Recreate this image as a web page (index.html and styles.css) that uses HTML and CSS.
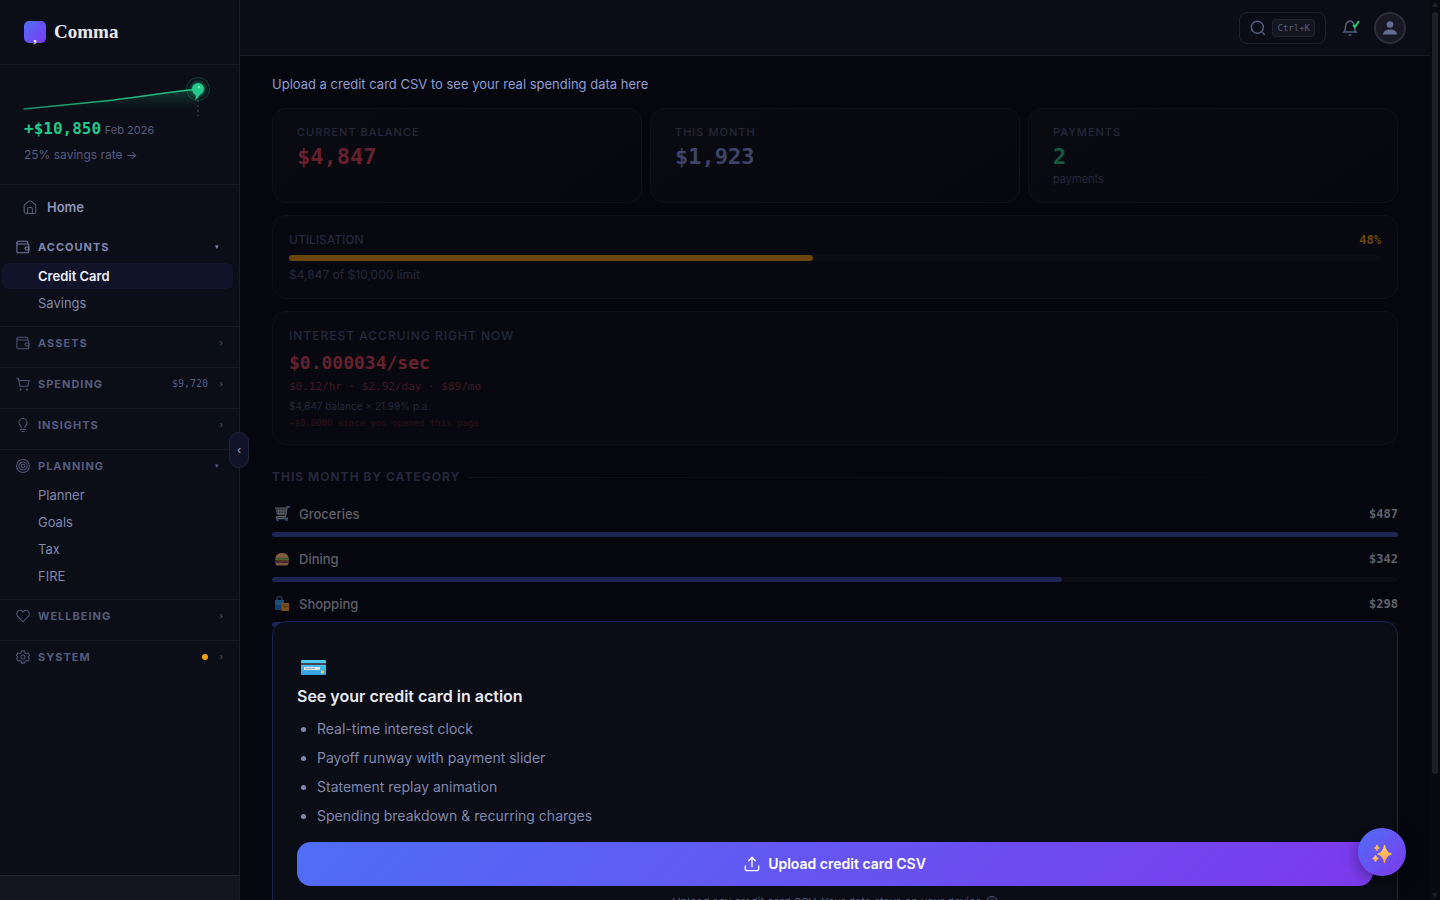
FILE: index.html
```html
<!DOCTYPE html>
<html lang="en">
<head>
  <meta charset="UTF-8">
  <meta name="viewport" content="width=device-width, initial-scale=1.0">
  <title>Comma - Credit Card</title>
  <link rel="stylesheet" href="styles.css">
</head>
<body>
  <div class="app">
    <aside class="sidebar">
      <a class="brand" href="#">
        <span class="brand-mark">,</span>
        <span class="brand-name">Comma</span>
      </a>

      <a class="summary" href="#">
        <svg class="spark" width="192" height="40" viewBox="0 0 192 40" fill="none">
          <defs>
            <linearGradient id="area" x1="0" y1="0" x2="0" y2="1">
              <stop offset="0" stop-color="#22c98a" stop-opacity=".22"/>
              <stop offset="1" stop-color="#22c98a" stop-opacity="0"/>
            </linearGradient>
            <linearGradient id="line" x1="0" y1="0" x2="1" y2="0">
              <stop offset="0" stop-color="#22c98a" stop-opacity=".7"/>
              <stop offset="1" stop-color="#22c98a"/>
            </linearGradient>
            <filter id="glow" x="-100%" y="-100%" width="300%" height="300%"><feGaussianBlur stdDeviation="2"/></filter>
          </defs>
          <path d="M0 33 L80 25 L140 17 L174 13 V33 Z" fill="url(#area)"/>
          <path d="M0 33 C60 27 70 26 90 24 C120 20 140 17 174 13" stroke="url(#line)" stroke-width="1.5" stroke-linecap="round"/>
          <path d="M174 24v16" stroke="#2a3246" stroke-width="2" stroke-dasharray="2 3"/>
          <circle cx="174" cy="13" r="11.500" stroke="#22c98a" stroke-opacity=".28"/>
          <circle cx="174" cy="13" r="7" fill="#22c98a" opacity=".6" filter="url(#glow)"/>
          <circle cx="174" cy="13" r="6" fill="#22c98a"/>
          <path d="M176 17c0 3-2 5-5 7 1-3 1-4 0-6z" fill="#22c98a"/>
          <circle cx="175" cy="11" r="1.300" fill="#7be8c0"/>
        </svg>
        <span class="summary-line"><strong>+$10,850</strong> <small>Feb 2026</small></span>
        <span class="summary-rate">25% savings rate →</span>
      </a>

      <nav class="nav">
        <a class="nav-home" href="#">
          <svg class="icon" viewBox="0 0 24 24"><path d="M2 10c0-1 .5-2 1.300-2.500L10.500 1.800c1-.8 2-.8 3 0l7.200 5.700c.8.5 1.300 1.500 1.300 2.500v10a3 3 0 0 1-3 3H5a3 3 0 0 1-3-3z"/><path d="M8 23v-8a2 2 0 0 1 2-2h4a2 2 0 0 1 2 2v8"/></svg>
          Home
        </a>

        <div class="group open current">
          <button class="group-head">
            <svg class="icon" viewBox="0 0 24 24"><path d="M20 7V4a2 2 0 0 0-2-2H4a2.500 2.500 0 0 0 0 5h16a2 2 0 0 1 2 2v11a2 2 0 0 1-2 2H4a2.500 2.500 0 0 1-2.500-2.500V4"/><path d="M22 12h-4a2.500 2.500 0 0 0 0 5h4z"/></svg>
            <span>Accounts</span><i>▾</i>
          </button>
          <ul>
            <li><a class="active" href="#">Credit Card</a></li>
            <li><a href="#">Savings</a></li>
          </ul>
        </div>

        <div class="group">
          <button class="group-head">
            <svg class="icon" viewBox="0 0 24 24"><path d="M20 7V4a2 2 0 0 0-2-2H4a2.500 2.500 0 0 0 0 5h16a2 2 0 0 1 2 2v11a2 2 0 0 1-2 2H4a2.500 2.500 0 0 1-2.500-2.500V4"/><path d="M22 12h-4a2.500 2.500 0 0 0 0 5h4z"/></svg>
            <span>Assets</span><i>›</i>
          </button>
        </div>

        <div class="group">
          <button class="group-head">
            <svg class="icon" viewBox="0 0 24 24"><circle cx="8" cy="21.500" r="1"/><circle cx="19" cy="21.500" r="1"/><path d="M1 2h3l3 14h13l2.500-10H5"/></svg>
            <span>Spending</span><em>$9,720</em><i>›</i>
          </button>
        </div>

        <div class="group">
          <button class="group-head">
            <svg class="icon" viewBox="0 0 24 24"><path d="M9 16c0-3-4-4-4-8a7 7 0 0 1 14 0c0 4-4 5-4 8M8 19.500h8M10 23h4"/></svg>
            <span>Insights</span><i>›</i>
          </button>
        </div>

        <div class="group open">
          <button class="group-head">
            <svg class="icon" viewBox="0 0 24 24"><circle cx="12" cy="12" r="11"/><circle cx="12" cy="12" r="7"/><circle cx="12" cy="12" r="3"/></svg>
            <span>Planning</span><i>▾</i>
          </button>
          <ul>
            <li><a href="#">Planner</a></li>
            <li><a href="#">Goals</a></li>
            <li><a href="#">Tax</a></li>
            <li><a href="#">FIRE</a></li>
          </ul>
        </div>

        <div class="group">
          <button class="group-head">
            <svg class="icon" viewBox="0 0 24 24"><path d="M21 4a6 6 0 0 0-8.200 0L12 5l-.8-1A6 6 0 0 0 3 4a6 6 0 0 0 0 8.500L12 22l9-9.500A6 6 0 0 0 21 4z"/></svg>
            <span>Wellbeing</span><i>›</i>
          </button>
        </div>

        <div class="group">
          <button class="group-head">
            <svg class="icon" viewBox="0 0 24 24"><path d="M9.500 1.500h5l.8 3.400 2.200 1.200 3.300-1 2.400 4.200-2.500 2.400v.6l2.500 2.400-2.400 4.200-3.300-1-2.200 1.200-.8 3.400h-5l-.8-3.400-2.200-1.200-3.300 1-2.400-4.200 2.500-2.400v-.6L.800 9.300l2.400-4.200 3.300 1 2.200-1.200z"/><circle cx="12" cy="12" r="3.500"/></svg>
            <span>System</span><b class="dot"></b><i>›</i>
          </button>
        </div>
      </nav>

      <div class="sidebar-foot"></div>
      <button class="collapse" aria-label="Collapse sidebar">‹</button>
    </aside>

    <div class="page">
      <header class="topbar">
        <button class="search" aria-label="Search">
          <svg width="16" height="16" viewBox="0 0 24 24"><circle cx="11" cy="11" r="9"/><path d="m18 18 4 4"/></svg>
          <kbd>Ctrl+K</kbd>
        </button>
        <button class="bell" aria-label="Notifications">
          <svg width="20" height="20" viewBox="0 0 20 20"><path d="M4 14c2-2 1-5 2-8 1-2 2-3 4-3s3 1 4 3c1 3 0 6 2 8zM8.500 17h3"/><path class="tick" d="m13 7 2 2 4-6"/></svg>
        </button>
        <button class="avatar" aria-label="Account">
          <svg width="16" height="16" viewBox="0 0 16 16"><circle cx="8" cy="4.500" r="3.300"/><path d="M1 14.500c0-3 3-5 7-5s7 2 7 5z"/></svg>
        </button>
      </header>

      <main class="content">
        <a class="upload-link" href="#">Upload a credit card CSV to see your real spending data here</a>

        <div class="preview">
          <div class="stats">
            <div class="card stat">
              <h3>Current balance</h3>
              <p class="value red">$4,847</p>
            </div>
            <div class="card stat">
              <h3>This month</h3>
              <p class="value blue">$1,923</p>
            </div>
            <div class="card stat">
              <h3>Payments</h3>
              <p class="value green">2</p>
              <p class="note">payments</p>
            </div>
          </div>

          <div class="card usage">
            <div class="usage-top"><h3>Utilisation</h3><strong>48%</strong></div>
            <div class="bar amber"><div style="width:48%"></div></div>
            <p>$4,847 of $10,000 limit</p>
          </div>

          <div class="card interest">
            <h3>Interest accruing right now</h3>
            <p class="rate">$0.000034/sec</p>
            <p class="rates">$0.12/hr · $2.92/day · $89/mo</p>
            <p class="basis">$4,847 balance × 21.99% p.a.</p>
            <p class="since">+$0.0000 since you opened this page</p>
          </div>

          <h2 class="section-title">This month by category</h2>
          <div class="category">
            <div class="category-top">
              <svg class="emoji" viewBox="0 0 16 16" fill="none">
                <path d="M1 2h11l-1 7H3z" fill="#4a4d55"/>
                <path d="M1 2h11.500M2 5h10M2.500 7.500h9M4 2l1 7M7 2v7M10 2l-1 7" stroke="#a5a8b0" stroke-width=".9"/>
                <path d="M15.500 1H13l-1.500 9.500H4c-2 0-2 2 0 2h10" stroke="#a5a8b0" stroke-width="1.300"/>
                <circle cx="15" cy="1" r="1" fill="#3b82d6"/><circle cx="3.500" cy="14" r="1.300" fill="#3b82d6"/><circle cx="12.500" cy="14" r="1.300" fill="#3b82d6"/>
              </svg>
              <span>Groceries</span><strong>$487</strong>
            </div>
            <div class="bar"><div style="width:100%"></div></div>
          </div>
          <div class="category">
            <div class="category-top">
              <svg class="emoji" viewBox="0 0 16 16">
                <path d="M1.500 7c0-3 2.500-5 6.500-5s6.500 2 6.500 5z" fill="#d79b66"/>
                <path d="M1 7h14v2l-2 1-2-1-2 1-2-1-2 1-2-1H1z" fill="#5a9a43"/>
                <path d="M1.500 8.500h13v1h-13z" fill="#d9b23f"/>
                <path d="M1 9.500h14V12H1z" fill="#874247"/>
                <path d="M1.500 12h13c0 2-1 2.500-2.500 2.500H4c-1.500 0-2.500-.5-2.500-2.500z" fill="#d79b66"/>
                <path d="M5 4.500h1M8 3.800h1M11 5h1" stroke="#f5dcae"/>
              </svg>
              <span>Dining</span><strong>$342</strong>
            </div>
            <div class="bar"><div style="width:70.2%"></div></div>
          </div>
          <div class="category">
            <div class="category-top">
              <svg class="emoji" viewBox="0 0 16 16" fill="none">
                <path d="M3 4V2c0-2 5-2 5 0v2" stroke="#3678a8" stroke-width="1.200"/>
                <path d="M1 4h9v10H1z" fill="#2f8ed1"/><path d="M1 9h9v5H1z" fill="#236db8"/>
                <path d="M7.500 7H15v8H7.500z" fill="#db8b25"/>
                <path d="M9.500 9c0 3 3.500 3 3.500 0" stroke="#7c4716"/>
              </svg>
              <span>Shopping</span><strong>$298</strong>
            </div>
            <div class="bar"><div style="width:61.2%"></div></div>
          </div>
        </div>

        <section class="teaser">
          <svg class="teaser-icon" width="32" height="32" viewBox="0 0 32 32">
            <defs>
              <linearGradient id="card" x1="0" y1="0" x2="0" y2="1"><stop offset="0" stop-color="#4fd0e8"/><stop offset="1" stop-color="#349ce8"/></linearGradient>
            </defs>
            <rect x="4" y="8" width="25" height="15" rx="1" fill="url(#card)"/>
            <path d="M4 11h25v2H4z" fill="#4b4357"/>
            <path d="M7 15h16v3H7z" fill="#e4e6ec"/><path d="M8 16h10v1H8z" fill="#a3a6b4"/>
            <circle cx="25.500" cy="20" r="1.800" fill="#e8cf4c"/>
          </svg>
          <h2>See your credit card in action</h2>
          <ul>
            <li>Real-time interest clock</li>
            <li>Payoff runway with payment slider</li>
            <li>Statement replay animation</li>
            <li>Spending breakdown &amp; recurring charges</li>
          </ul>
          <button class="upload">
            <svg width="16" height="16" viewBox="0 0 24 24"><path d="M2 15v4a3 3 0 0 0 3 3h14a3 3 0 0 0 3-3v-4M12 16V2M7 7l5-5 5 5"/></svg>
            Upload credit card CSV
          </button>
          <p class="hint">Upload any credit card CSV. Your data stays on your device
            <svg width="12" height="12" viewBox="0 0 24 24"><circle cx="12" cy="12" r="11"/><path d="M9 9c0-4 6-4 6 0 0 2-3 2-3 5M12 17v1"/></svg>
          </p>
        </section>
      </main>
    </div>

    <div class="scrollbar">
      <svg width="10" height="12" viewBox="0 0 10 12"><path d="M5 2 8 7H2z"/></svg>
      <div class="track"><div class="thumb"></div></div>
      <svg width="10" height="12" viewBox="0 0 10 12"><path d="M5 10 8 5H2z"/></svg>
    </div>

    <button class="assistant" aria-label="Assistant">
      <svg width="24" height="24" viewBox="0 0 24 24">
        <defs>
          <linearGradient id="star" x1="0" y1="0" x2="0" y2="1"><stop offset="0" stop-color="#ffd45c"/><stop offset="1" stop-color="#ff9f5a"/></linearGradient>
        </defs>
        <g fill="url(#star)" stroke="url(#star)" stroke-width=".8" stroke-linejoin="round">
          <path d="M14.500 5q1.200 7.300 7 9-5.800 1.700-7 9-1.200-7.300-7-9 5.800-1.700 7-9z"/>
          <path d="M7 5q.6 2.600 2.500 3-1.900.4-2.500 3-.6-2.600-2.500-3Q6.400 7.600 7 5z"/>
          <path d="M5.500 15q.7 3 3 3.500-2.300.5-3 3.500-.7-3-3-3.500 2.300-.5 3-3.500z"/>
        </g>
      </svg>
    </button>
  </div>
</body>
</html>
```
FILE: styles.css
```css
* {
  box-sizing: border-box;
}
body {
  margin: 0;
  background: #05060e;
  color: #e8eaf2;
  font-family: Inter, "Liberation Sans", sans-serif;
  font-size: 13px;
  line-height: 20px;
}
h2, h3, p, ul {
  margin: 0;
  padding: 0;
}
a {
  color: inherit;
  text-decoration: none;
}
button {
  font: inherit;
  color: inherit;
  background: none;
  border: 0;
  padding: 0;
  cursor: pointer;
}
svg {
  flex: none;
}
.app {
  display: flex;
  height: 100vh;
  overflow: hidden;
}

/* sidebar */
.sidebar {
  position: relative;
  z-index: 2;
  display: flex;
  flex-direction: column;
  width: 240px;
  flex: none;
  background: #0b0d17;
  border-right: 1px solid #1a1c26;
}
.brand {
  display: flex;
  align-items: center;
  gap: 8px;
  height: 65px;
  padding: 0 24px;
  border-bottom: 1px solid #161822;
}
.brand-mark {
  display: flex;
  align-items: flex-end;
  justify-content: center;
  width: 22px;
  height: 22px;
  border-radius: 5px;
  background: linear-gradient(135deg, #4f6ef7, #7c3aed);
  color: #fff;
  font: bold 14px/10px "Liberation Serif", serif;
}
.brand-name {
  font: bold 19px/24px "Liberation Serif", serif;
}
.summary {
  display: flex;
  flex-direction: column;
  height: 120px;
  padding: 11px 24px 0;
  border-bottom: 1px solid #161822;
  color: #565c7d;
}
.spark {
  overflow: visible;
}
.summary-line {
  margin-top: 3px;
}
.summary-line strong {
  color: #22c98a;
  font: bold 16px/20px "DejaVu Sans Mono", monospace;
}
.summary-line small {
  font-size: 11px;
}
.summary-rate {
  margin-top: 5px;
  font-size: 12px;
}
.nav {
  flex: 1;
}
.icon {
  width: 14px;
  height: 14px;
  fill: none;
  stroke: currentColor;
  stroke-width: 1.8;
  stroke-linecap: round;
  stroke-linejoin: round;
  opacity: .9;
}
.nav-home {
  display: flex;
  align-items: center;
  gap: 10px;
  height: 32px;
  margin: 6px 0 8px;
  padding-left: 23px;
  color: #8d96bd;
  font-weight: 600;
}
.nav-home .icon {
  opacity: .6;
}
.group {
  padding-bottom: 8px;
  border-top: 1px solid #161822;
}
.group.current {
  border-top: 0;
}
.group-head {
  display: flex;
  align-items: center;
  gap: 8px;
  width: 100%;
  height: 32px;
  padding: 0 16px;
  color: #565c7d;
  text-align: left;
}
.current .group-head {
  color: #8088b0;
}
.group-head span {
  flex: 1;
  font-size: 11px;
  font-weight: 700;
  letter-spacing: 1px;
  text-transform: uppercase;
}
.group-head i {
  width: 5px;
  font-size: 9px;
  font-style: normal;
  text-align: right;
}
.open .group-head i {
  width: 8px;
  font-size: 7px;
  text-align: left;
}
.group-head em {
  font: normal 10px/16px "DejaVu Sans Mono", monospace;
}
.dot {
  width: 6px;
  height: 6px;
  border-radius: 50%;
  background: #f59e0b;
}
.group-head em, .dot {
  margin-right: 2px;
}
.group ul {
  padding: 0 6px 1px 2px;
  list-style: none;
}
.group li a {
  display: block;
  height: 26px;
  margin-bottom: 1px;
  padding-left: 36px;
  border-radius: 6px;
  color: #8088ac;
  line-height: 26px;
}
.group li a.active {
  background: #111329;
  color: #eef0f8;
  font-weight: 600;
}
.sidebar-foot {
  height: 25px;
  background: #14161f;
  border-top: 1px solid #22242e;
}
.collapse {
  position: absolute;
  top: 432px;
  right: -10px;
  width: 20px;
  height: 36px;
  background: #111328;
  border: 1px solid #22253a;
  border-radius: 10px;
  color: #9aa2c8;
  font-size: 11px;
}

/* top bar */
.page {
  flex: 1;
  min-width: 0;
}
.topbar {
  display: flex;
  align-items: center;
  justify-content: flex-end;
  gap: 14px;
  height: 56px;
  padding: 0 24px;
  background: #0a0c16;
  border-bottom: 1px solid #1a1b24;
}
.topbar svg {
  fill: none;
  stroke: #565c7d;
  stroke-width: 1.5;
}
.search {
  display: flex;
  align-items: center;
  gap: 6px;
  height: 32px;
  padding: 0 10px;
  border: 1px solid #1e202b;
  border-radius: 8px;
}
.search svg {
  stroke-width: 2.2;
}
.search kbd {
  padding: 0 4px;
  background: #14151f;
  border: 1px solid #22242f;
  border-radius: 4px;
  color: #565c7d;
  font: 9px/16px "DejaVu Sans Mono", monospace;
}
.bell {
  display: flex;
}
.bell .tick {
  stroke: #22c96e;
  stroke-width: 2;
}
.avatar {
  display: flex;
  align-items: center;
  justify-content: center;
  width: 32px;
  height: 32px;
  background: #171821;
  border: 2px solid #2c2e38;
  border-radius: 50%;
}
.avatar svg {
  fill: #626b94;
  stroke: none;
}

/* content */
.content {
  position: relative;
  height: calc(100vh - 56px);
  padding: 18px 32px 0;
  overflow: hidden;
}
.upload-link {
  display: block;
  margin-bottom: 14px;
  color: #8f9ed2;
}
.card {
  margin-bottom: 12px;
  padding: 14px 16px;
  background: #080910;
  border: 1px solid #0f1118;
  border-radius: 14px;
}
.card h3 {
  color: #24273a;
  font-size: 12px;
  font-weight: 500;
  letter-spacing: 1px;
  text-transform: uppercase;
}
.stats {
  display: grid;
  grid-template-columns: repeat(3, 1fr);
  gap: 8px;
}
.stat {
  height: 95px;
  padding: 13px 24px;
  background: linear-gradient(145deg, #0a0b11, #07080f);
}
.stat h3 {
  font-size: 11px;
}
.value {
  font: bold 22px/30px "DejaVu Sans Mono", monospace;
}
.red { color: #66202e; }
.blue { color: #3d4468; }
.green { color: #12593f; }
.note {
  color: #24273a;
  font-size: 11px;
  line-height: 14px;
}
.usage {
  height: 84px;
}
.usage h3 {
  letter-spacing: 0;
}
.usage-top {
  display: flex;
  justify-content: space-between;
}
.usage strong {
  color: #694509;
  font: bold 12px/20px "DejaVu Sans Mono", monospace;
}
.bar {
  height: 5px;
  border-radius: 3px;
  background: #0b0c14;
}
.bar div {
  height: 100%;
  border-radius: 3px;
  background: #1c2452;
}
.bar.amber {
  height: 6px;
  margin: 5px 0 4px;
}
.bar.amber div {
  background: #694509;
}
.usage p {
  color: #24273a;
  font-size: 12px;
}
.interest {
  height: 134px;
}
.rate {
  margin-top: 4px;
  color: #66202e;
  font: bold 18px/26px "DejaVu Sans Mono", monospace;
}
.rates {
  color: #401722;
  font: 11px/22px "DejaVu Sans Mono", monospace;
}
.basis {
  color: #24273a;
  font-size: 10px;
  line-height: 16px;
}
.since {
  color: #2e121b;
  font: 9px/18px "DejaVu Sans Mono", monospace;
}
.section-title {
  display: flex;
  align-items: center;
  gap: 8px;
  margin: 22px 0 17px;
  color: #24273a;
  font-size: 12px;
  font-weight: 700;
  letter-spacing: 1px;
  line-height: 20px;
  text-transform: uppercase;
}
.section-title::after {
  content: "";
  flex: 1;
  height: 1px;
  background: linear-gradient(90deg, #10121b, #05060e);
}
.category {
  margin-bottom: 12px;
}
.category-top {
  display: flex;
  align-items: center;
  height: 20px;
  margin-bottom: 8px;
  color: #606168;
  font-weight: 500;
}
.category-top .emoji {
  width: 16px;
  height: 16px;
  margin: 0 9px 0 2px;
  opacity: .55;
}
.category-top strong {
  margin-left: auto;
  font: bold 12px/20px "DejaVu Sans Mono", monospace;
}

/* teaser panel laid over the sample data */
.teaser {
  position: absolute;
  top: 565px;
  left: 32px;
  right: 32px;
  padding: 30px 24px 24px;
  background: #0a0c16;
  border: 1px solid #1b2350;
  border-radius: 14px;
}
.teaser-icon {
  display: block;
}
.teaser h2 {
  font-size: 16px;
  font-weight: 600;
  line-height: 24px;
}
.teaser ul {
  margin: 9px 0 15px;
  padding-left: 20px;
  color: #8088ac;
  font-size: 14px;
}
.teaser li {
  margin-bottom: 6px;
  line-height: 23px;
}
.teaser li:last-child {
  margin-bottom: 0;
}
.upload {
  display: flex;
  align-items: center;
  justify-content: center;
  gap: 8px;
  width: 100%;
  height: 44px;
  background: linear-gradient(135deg, #4f6ef7, #7c3aed);
  border-radius: 14px;
  color: #fff;
  font-size: 14px;
  font-weight: 600;
}
.upload svg, .hint svg {
  fill: none;
  stroke: currentColor;
  stroke-width: 2;
  stroke-linecap: round;
  stroke-linejoin: round;
}
.hint {
  display: flex;
  align-items: center;
  justify-content: center;
  gap: 4px;
  margin-top: 6px;
  color: #565c7d;
  font-size: 11px;
}

/* scroll rail */
.scrollbar {
  display: flex;
  flex-direction: column;
  width: 10px;
  flex: none;
  background: #090911;
}
.scrollbar svg {
  fill: #20202a;
}
.track {
  flex: 1;
}
.thumb {
  width: 6px;
  height: 87%;
  margin: 0 auto;
  background: #1e1e28;
  border-radius: 3px;
}

.assistant {
  position: absolute;
  z-index: 3;
  right: 34px;
  bottom: 24px;
  display: flex;
  align-items: center;
  justify-content: center;
  width: 48px;
  height: 48px;
  background: linear-gradient(135deg, #4f6ef7, #7c3aed);
  border-radius: 50%;
  box-shadow: 0 4px 16px rgba(0, 0, 0, .4);
}
```
